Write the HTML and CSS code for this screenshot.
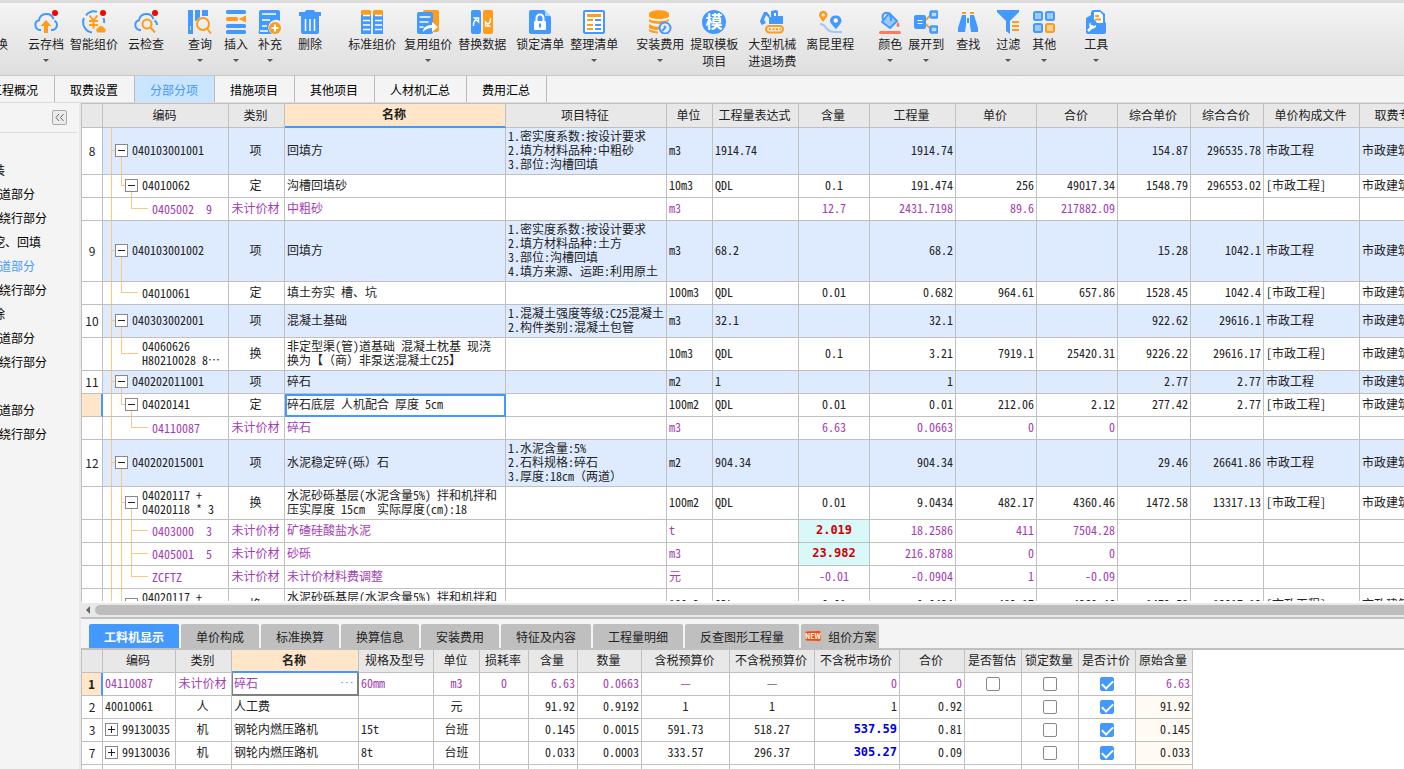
FILE: index.html
```html
<!DOCTYPE html>
<html lang="zh-CN">
<head>
<meta charset="utf-8">
<title>分部分项</title>
<link rel="stylesheet" href="styles.css">
</head>
<body>
<div class="app">
<header class="toolbar">
  <button class="tool first"><span class="glyph"></span><span>替换</span></button>
  <button class="tool g20"><svg class="glyph" viewBox="0 0 24 24"><path class="bs" d="M7 20H6a5 5 0 0 1-1-9.800a7.500 7.500 0 0 1 14.500-1M17 20h1a5 5 0 0 0 2.500-9.300"/><path class="o" d="M12 10l5.500 6H14v7h-4v-7H6.500z"/><circle class="r" cx="21" cy="3" r="3"/></svg><span>云存档</span><i class="caret"></i></button>
  <button class="tool g6"><svg class="glyph" viewBox="0 0 24 24"><path class="bs" d="M15 1.800A10.500 10.500 0 0 0 4 5.500M2 8a10.500 10.500 0 0 0 8 14.500M21.500 8a10 10 0 0 1 .5 5"/><path class="os" d="M7.500 5.500l4 5 4-5M7 11h9M7 15h9M11.500 10.500v8"/><path class="o" d="M15.500 22.500a2.500 2.500 0 0 1 .5-4.500a3.300 3.300 0 0 1 6 0a2.500 2.500 0 0 1 .5 4.500z"/><circle class="r" cx="21" cy="3" r="3"/></svg><span>智能组价</span></button>
  <button class="tool g10"><svg class="glyph" viewBox="0 0 24 24"><path class="bs" d="M7 20H6a5 5 0 0 1-1-9.800a7.500 7.500 0 0 1 14.500-1M23 15a5 5 0 0 0-2.500-4.300"/><circle class="os" cx="13" cy="14" r="4.500"/><path class="os" d="M16.500 17.500l4.500 5"/><circle class="r" cx="21" cy="3" r="3"/></svg><span>云检查</span></button>
  <button class="tool g24"><svg class="glyph" viewBox="0 0 24 24"><path class="b" d="M0 0h5v24H0zM7 0h5v7l-4 4H7zM14 0h6v6h-6z"/><path d="M2 16h1v4H2z" fill="#bde"/><circle class="os" cx="15" cy="14" r="6"/><path class="os" d="M19 18.500l4 5"/></svg><span>查询</span><i class="caret"></i></button>
  <button class="tool g12"><svg class="glyph" viewBox="0 0 24 24"><rect class="b" x="2" width="20" height="4" rx="1.500"/><rect class="o" x="2" y="7" width="12" height="4" rx="1.500"/><path class="o" d="M14.500 9L22 5.500v7z"/><rect class="b" x="2" y="14" width="20" height="4" rx="1.500"/><rect class="b" x="2" y="20" width="20" height="4" rx="1.500"/></svg><span>插入</span><i class="caret"></i></button>
  <button class="tool g10"><svg class="glyph" viewBox="0 0 24 24"><path class="b" d="M3 0h17a2 2 0 0 1 2 2v9a7 7 0 0 0-8 13H2a2 2 0 0 1-1-3V2a2 2 0 0 1 2-2z"/><path d="M4 4h14M4 10h8M4 16h5M2 21h8" stroke="#fff" stroke-width="1.500"/><circle class="o" cx="17" cy="18" r="6"/><path d="M17 14.500v7M13.500 18h7" stroke="#fff" stroke-width="2"/></svg><span>补充</span><i class="caret"></i></button>
  <button class="tool g16"><svg class="glyph" viewBox="0 0 24 24"><path class="b" d="M8 0h8l1 2h6v4H1V2h6zM3 6h18v16a2 2 0 0 1-2 2H5a2 2 0 0 1-2-2z"/><path d="M7.500 9v12M12 9v12M16.500 9v12" stroke="#fff" stroke-width="1.500"/></svg><span>删除</span></button>
  <button class="tool g26"><svg class="glyph" viewBox="0 0 24 24"><path class="b" d="M1 5h10v19H1zM13 5h10v19H13z"/><path class="o" d="M2 0h8l1 1v4H1V1zM14 0h8l1 1v4H13V1z"/><path d="M3 5.500h7M3 10.500h7M3 15h7M3 19.500h7M15 5.500h7M15 10.500h7M15 15h7M15 19.500h7" stroke="#fff" stroke-width="1.500"/></svg><span>标准组价</span></button>
  <button class="tool g8"><svg class="glyph" viewBox="0 0 24 24"><rect class="o" x="7" width="16" height="22" rx="2"/><rect class="b" x="1" y="2" width="16" height="22" rx="2"/><path d="M3.500 7h11M3.500 12h9M3.500 17h4" stroke="#fff" stroke-width="1.500"/><path d="M7 22c0-5 4-7 9-7v-3l6 5-6 5v-4c-4 0-6 1-9 4z" fill="#fff"/></svg><span>复用组价</span><i class="caret"></i></button>
  <button class="tool g6"><svg class="glyph" viewBox="0 0 24 24"><rect class="b" x="1" width="10" height="24" rx="2"/><rect class="o" x="13" width="10" height="24" rx="2"/><path d="M3.500 16c0-4 .5-5 3-6.500M4.500 8h4v4zM20.500 8c0 4-.5 5-3 6.500M19.500 16h-4v-4z" fill="none" stroke="#fff" stroke-width="1.500"/></svg><span>替换数据</span></button>
  <button class="tool g10"><svg class="glyph" viewBox="0 0 24 24"><path class="b" d="M3 0h13l7 7v15a2 2 0 0 1-2 2H3a2 2 0 0 1-2-2V2a2 2 0 0 1 2-2z"/><path d="M17 0l6 6h-6z" fill="#a9d3ff"/><rect x="6" y="11" width="12" height="9" rx="1" fill="#fff"/><path d="M8.500 11V8a3.500 3.500 0 0 1 7 0v3" fill="none" stroke="#fff" stroke-width="2"/><path d="M12 13.500v4" stroke="#49f" stroke-width="2"/></svg><span>锁定清单</span></button>
  <button class="tool g6"><svg class="glyph" viewBox="0 0 24 24"><rect x="2" y="1" width="20" height="22" rx="1" fill="#fff" stroke="#49f" stroke-width="2"/><path class="o" d="M5 4h14v3H5zM5 9h6v2H5zM5 14h6v2H5zM5 18h6v2H5z"/><path class="b" d="M13 9h6v2h-6zM13 14h6v2h-6zM13 18h6v2h-6z"/></svg><span>整理清单</span><i class="caret"></i></button>
  <button class="tool g18"><svg class="glyph" viewBox="0 0 24 24"><path class="o" d="M1 4c0-5 20-5 20 0v2c0 4-20 4-20 0zM1 9c4 3 16 3 20 0v2c-3 1-5 2-7 3-6 0-13-1-13-3zM1 14c3 2 7 3 10 3l-1 3c-5 0-9-1-9-3zM1 19c3 2 6 2 9 2.500v2C5 23 1 22 1 21z"/><circle class="bs" cx="17" cy="18" r="5.500"/><path class="bs" d="M14 21l3-3m-1-2l2 2"/></svg><span>安装费用</span><i class="caret"></i></button>
  <button class="tool g6"><svg class="glyph" viewBox="0 0 24 24"><circle class="b" cx="12" cy="12" r="12"/><text x="12" y="18" class="badge-char">模</text></svg><span>提取模板<br>项目</span></button>
  <button class="tool g10"><svg class="glyph" viewBox="0 0 24 24"><path class="b" d="M11 1l5-1 2 1v5h5v8H9V7h2zM0 11l4-9h3l3 4-1 2-3-3-2 5 2 3-4 2c-1-1-2-3-2-4z"/><path d="M14 3h2v3h-2z" fill="#fff"/><rect class="os" x="6" y="16" width="17" height="6.500" rx="3.200"/><path d="M9 19.300h12" stroke="#ff9c1a" stroke-width="2" stroke-dasharray="2 1.500"/></svg><span>大型机械<br>进退场费</span></button>
  <button class="tool g10"><svg class="glyph" viewBox="0 0 24 24"><path d="M2 14c5 0 5 3 7 5s4 3 7 3h8" fill="none" stroke="#9ccaff" stroke-width="2"/><path class="o" d="M5 12C3 9 1 7 1 5a4.200 4.200 0 0 1 8.500 0c0 2-2.500 4-4.500 7z"/><circle cx="5.200" cy="5" r="1.600" fill="#fff"/><path class="b" d="M18 19c-3-3-6-6-6-8.500a5.800 5.800 0 0 1 11.500 0c0 2.500-2.500 5.500-5.500 8.500z"/><circle cx="17.700" cy="10.500" r="2.200" fill="#fff"/></svg><span>离昆里程</span></button>
  <button class="tool g24"><svg class="glyph" viewBox="0 0 24 24"><path d="M11 3l8 8-7 7-8-6z" fill="#9ccaff" stroke="#49f" stroke-width="2" stroke-linejoin="round"/><path class="bs" d="M5 10c-2-8 5-10 8-2v3"/><path d="M20 12c2 2 2 5 0 5s-2-3 0-5z" fill="#f97c5c"/><rect x="1" y="21" width="22" height="3" rx="1.500" fill="#f97c5c"/></svg><span>颜色</span><i class="caret"></i></button>
  <button class="tool g6"><svg class="glyph" viewBox="0 0 24 24"><path class="os" d="M11 10c3 0 3-5 7-5M11 14c3 0 3 5 7 5"/><rect class="b" y="5" width="12" height="14" rx="2"/><path d="M3.500 10.500h5M3.500 13.500h5" stroke="#fff" stroke-width="1.200"/><rect x="16.500" y="1.500" width="7" height="6" rx="1" fill="#bde" stroke="#49f" stroke-width="2.500"/><rect x="16.500" y="16.500" width="7" height="6" rx="1" fill="#bde" stroke="#49f" stroke-width="2.500"/></svg><span>展开到</span><i class="caret"></i></button>
  <button class="tool g12"><svg class="glyph" viewBox="0 0 24 24"><path class="o" d="M6 2h4v2H6zM14 2h4v2h-4z"/><path class="b" d="M6 5h4v10l-1 7H2v-4zM14 5h4l4 13v4h-7l-1-7zM11 8h2v5h-2z"/></svg><span>查找</span></button>
  <button class="tool g16"><svg class="glyph" viewBox="0 0 24 24"><path class="b" d="M1 0h22v2l-9 9v13l-4-3V11L1 2z"/><path class="o" d="M16 11h7v2h-7zM16 15h7v2h-7zM16 19h7v2h-7z"/></svg><span>过滤</span><i class="caret"></i></button>
  <button class="tool g12"><svg class="glyph" viewBox="0 0 24 24"><g fill="#9ccaff" stroke="#49f" stroke-width="2"><rect x="2" y="2" width="8" height="8" rx="1.500"/><rect x="14" y="2" width="8" height="8" rx="1.500"/><rect x="2" y="14" width="8" height="8" rx="1.500"/></g><rect x="14" y="14" width="8" height="8" rx="1.500" fill="#ffcf8e" stroke="#ff9c1a" stroke-width="2"/></svg><span>其他</span><i class="caret"></i></button>
  <button class="tool g28"><svg class="glyph" viewBox="0 0 24 24"><path class="b" d="M2 8l5-3V3a3 3 0 0 1 3-3h6l5 4v8l1 1v9a2 2 0 0 1-2 2H4a2 2 0 0 1-2-2z"/><path d="M10 2h6l3 3v8h-6l-3-4z" fill="#fff"/><path class="o" d="M11 5h4v2h-4zM11 8.500h6v2h-6z"/><path d="M4 21l5-5" stroke="#fff" stroke-width="2.500"/><path d="M6 12l1 3 3 1 2-1v2l-3 2-4-3z" fill="#fff"/></svg><span>工具</span><i class="caret"></i></button>
</header>

<nav class="tabs">
  <a href="#">工程概况</a><a href="#">取费设置</a><a href="#" class="on">分部分项</a><a href="#">措施项目</a><a href="#">其他项目</a><a href="#">人材机汇总</a><a href="#">费用汇总</a>
</nav>

<div class="body">
<aside class="side">
  <div class="side-head"><button aria-label="收起"><svg viewBox="0 0 13 13"><path d="M6 3L3 6.500 6 10M10.500 3l-3 3.500 3 3.500"/></svg></button></div>
  <ul>
    <li class="far">装</li><li>道部分</li><li>绕行部分</li><li class="far">挖、回填</li><li class="on">道部分</li><li>绕行部分</li><li class="far">除</li><li>道部分</li><li>绕行部分</li><li></li><li>道部分</li><li>绕行部分</li>
  </ul>
</aside>

<main class="work">
<div class="grid-wrap">
<table class="grid list">
<colgroup><col class="w21"><col class="w126"><col class="w56"><col class="w221"><col class="w161"><col class="w46"><col class="w86"><col class="w71"><col class="w86"><col class="w81"><col class="w81"><col class="w73"><col class="w73"><col class="w96"><col class="w80"></colgroup>
<thead><tr><th></th><th>编码</th><th>类别</th><th class="cur">名称</th><th>项目特征</th><th>单位</th><th>工程量表达式</th><th>含量</th><th>工程量</th><th>单价</th><th>合价</th><th>综合单价</th><th>综合合价</th><th>单价构成文件</th><th>取费专业</th></tr></thead>
<tbody>
<tr class="item"><th>8</th><td class="n root"><button class="tg" aria-label="折叠"></button><span>040103001001</span></td><td>项</td><td>回填方</td><td>1.密实度系数:按设计要求
2.填方材料品种:中粗砂
3.部位:沟槽回填</td><td>m3</td><td>1914.74</td><td></td><td>1914.74</td><td></td><td></td><td>154.87</td><td>296535.78</td><td>市政工程</td><td>市政建筑</td></tr>
<tr><th></th><td class="n group"><button class="tg" aria-label="折叠"></button><span>04010062</span></td><td>定</td><td>沟槽回填砂</td><td></td><td>10m3</td><td>QDL</td><td>0.1</td><td>191.474</td><td>256</td><td>49017.34</td><td>1548.79</td><td>296553.02</td><td>[市政工程]</td><td>市政建筑</td></tr>
<tr class="mat"><th></th><td class="n leaf2"><span>0405002  9</span></td><td>未计价材</td><td>中粗砂</td><td></td><td>m3</td><td></td><td>12.7</td><td>2431.7198</td><td>89.6</td><td>217882.09</td><td></td><td></td><td></td><td></td></tr>
<tr class="item"><th>9</th><td class="n root"><button class="tg" aria-label="折叠"></button><span>040103001002</span></td><td>项</td><td>回填方</td><td>1.密实度系数:按设计要求
2.填方材料品种:土方
3.部位:沟槽回填
4.填方来源、运距:利用原土</td><td>m3</td><td>68.2</td><td></td><td>68.2</td><td></td><td></td><td>15.28</td><td>1042.1</td><td>市政工程</td><td>市政建筑</td></tr>
<tr><th></th><td class="n leaf1"><span>04010061</span></td><td>定</td><td>填土夯实 槽、坑</td><td></td><td>100m3</td><td>QDL</td><td>0.01</td><td>0.682</td><td>964.61</td><td>657.86</td><td>1528.45</td><td>1042.4</td><td>[市政工程]</td><td>市政建筑</td></tr>
<tr class="item"><th>10</th><td class="n root"><button class="tg" aria-label="折叠"></button><span>040303002001</span></td><td>项</td><td>混凝土基础</td><td>1.混凝土强度等级:C25混凝土
2.构件类别:混凝土包管</td><td>m3</td><td>32.1</td><td></td><td>32.1</td><td></td><td></td><td>922.62</td><td>29616.1</td><td>市政工程</td><td>市政建筑</td></tr>
<tr><th></th><td class="n leaf1"><span>04060626
H80210028 8…</span></td><td>换</td><td>非定型渠(管)道基础 混凝土枕基 现浇
换为【（商）非泵送混凝土C25】</td><td></td><td>10m3</td><td>QDL</td><td>0.1</td><td>3.21</td><td>7919.1</td><td>25420.31</td><td>9226.22</td><td>29616.17</td><td>[市政工程]</td><td>市政建筑</td></tr>
<tr class="item"><th>11</th><td class="n root"><button class="tg" aria-label="折叠"></button><span>040202011001</span></td><td>项</td><td>碎石</td><td></td><td>m2</td><td>1</td><td></td><td>1</td><td></td><td></td><td>2.77</td><td>2.77</td><td>市政工程</td><td>市政建筑</td></tr>
<tr><th class="cur"></th><td class="n group"><button class="tg" aria-label="折叠"></button><span>04020141</span></td><td>定</td><td class="picked">碎石底层 人机配合 厚度 5cm</td><td></td><td>100m2</td><td>QDL</td><td>0.01</td><td>0.01</td><td>212.06</td><td>2.12</td><td>277.42</td><td>2.77</td><td>[市政工程]</td><td>市政建筑</td></tr>
<tr class="mat"><th></th><td class="n leaf2"><span>04110087</span></td><td>未计价材</td><td>碎石</td><td></td><td>m3</td><td></td><td>6.63</td><td>0.0663</td><td>0</td><td>0</td><td></td><td></td><td></td><td></td></tr>
<tr class="item"><th>12</th><td class="n root"><button class="tg" aria-label="折叠"></button><span>040202015001</span></td><td>项</td><td>水泥稳定碎(砾）石</td><td>1.水泥含量:5%
2.石料规格:碎石
3.厚度:18cm（两道）</td><td>m2</td><td>904.34</td><td></td><td>904.34</td><td></td><td></td><td>29.46</td><td>26641.86</td><td>市政工程</td><td>市政建筑</td></tr>
<tr><th></th><td class="n group more"><button class="tg" aria-label="折叠"></button><span>04020117 +
04020118 * 3</span></td><td>换</td><td>水泥砂砾基层(水泥含量5%) 拌和机拌和
压实厚度 15cm  实际厚度(cm):18</td><td></td><td>100m2</td><td>QDL</td><td>0.01</td><td>9.0434</td><td>482.17</td><td>4360.46</td><td>1472.58</td><td>13317.13</td><td>[市政工程]</td><td>市政建筑</td></tr>
<tr class="mat"><th></th><td class="n leaf2 more"><span>0403000  3</span></td><td>未计价材</td><td>矿碴硅酸盐水泥</td><td></td><td>t</td><td></td><td class="edited">2.019</td><td>18.2586</td><td>411</td><td>7504.28</td><td></td><td></td><td></td><td></td></tr>
<tr class="mat"><th></th><td class="n leaf2 more"><span>0405001  5</span></td><td>未计价材</td><td>砂砾</td><td></td><td>m3</td><td></td><td class="edited">23.982</td><td>216.8788</td><td>0</td><td>0</td><td></td><td></td><td></td><td></td></tr>
<tr class="mat"><th></th><td class="n leaf2 end"><span>ZCFTZ</span></td><td>未计价材</td><td>未计价材料费调整</td><td></td><td>元</td><td></td><td>-0.01</td><td>-0.0904</td><td>1</td><td>-0.09</td><td></td><td></td><td></td><td></td></tr>
<tr><th></th><td class="n group more"><button class="tg" aria-label="折叠"></button><span>04020117 +
04020118 * 3</span></td><td>换</td><td>水泥砂砾基层(水泥含量5%) 拌和机拌和
压实厚度 15cm  实际厚度(cm):18</td><td></td><td>100m2</td><td>QDL</td><td>0.01</td><td>9.0434</td><td>482.17</td><td>4360.46</td><td>1472.58</td><td>13317.13</td><td>[市政工程]</td><td>市政建筑</td></tr>
</tbody>
</table>
</div>
<div class="hscroll"><button aria-label="向左滚动"></button><div class="thumb"></div></div>

<section class="detail">
<nav class="subtabs">
  <button class="on">工料机显示</button><button>单价构成</button><button>标准换算</button><button>换算信息</button><button>安装费用</button><button>特征及内容</button><button>工程量明细</button><button>反查图形工程量</button><button class="tight"><svg viewBox="0 0 16 10"><path d="M1 1l14-.5.5 4.500-.5 4.500L1 9z" fill="#ff4a00" stroke="#ff4a00" stroke-linejoin="round"/><text x="8" y="8">NEW</text></svg>组价方案</button>
</nav>
<div class="detail-wrap">
<table class="grid res">
<colgroup><col class="w21"><col class="w73"><col class="w56"><col class="w127"><col class="w75"><col class="w46"><col class="w49"><col class="w49"><col class="w64"><col class="w88"><col class="w85"><col class="w85"><col class="w65"><col class="w57"><col class="w57"><col class="w57"><col class="w57"></colgroup>
<thead><tr><th></th><th>编码</th><th>类别</th><th class="cur">名称</th><th>规格及型号</th><th>单位</th><th>损耗率</th><th>含量</th><th>数量</th><th>含税预算价</th><th>不含税预算价</th><th>不含税市场价</th><th>合价</th><th>是否暂估</th><th>锁定数量</th><th>是否计价</th><th>原始含量</th></tr></thead>
<tbody>
<tr class="mat"><th class="cur">1</th><td>04110087</td><td>未计价材</td><td class="editing"><div><span>碎石</span><button aria-label="选择">···</button></div></td><td>60mm</td><td>m3</td><td>0</td><td>6.63</td><td>0.0663</td><td>—</td><td>—</td><td>0</td><td>0</td><td><input type="checkbox" aria-label="是否暂估"></td><td><input type="checkbox" aria-label="锁定数量"></td><td><input type="checkbox" checked aria-label="是否计价"></td><td>6.63</td></tr>
<tr><th>2</th><td>40010061</td><td>人</td><td>人工费</td><td></td><td>元</td><td></td><td>91.92</td><td>0.9192</td><td>1</td><td>1</td><td>1</td><td>0.92</td><td></td><td><input type="checkbox" aria-label="锁定数量"></td><td><input type="checkbox" checked aria-label="是否计价"></td><td class="warm">91.92</td></tr>
<tr><th>3</th><td class="x"><button class="tg plus" aria-label="展开"></button><span>99130035</span></td><td>机</td><td>钢轮内燃压路机</td><td>15t</td><td>台班</td><td></td><td>0.145</td><td>0.0015</td><td>591.73</td><td>518.27</td><td class="price">537.59</td><td>0.81</td><td></td><td><input type="checkbox" aria-label="锁定数量"></td><td><input type="checkbox" checked aria-label="是否计价"></td><td class="warm">0.145</td></tr>
<tr><th>7</th><td class="x"><button class="tg plus" aria-label="展开"></button><span>99130036</span></td><td>机</td><td>钢轮内燃压路机</td><td>8t</td><td>台班</td><td></td><td>0.033</td><td>0.0003</td><td>333.57</td><td>296.37</td><td class="price">305.27</td><td>0.09</td><td></td><td><input type="checkbox" aria-label="锁定数量"></td><td><input type="checkbox" checked aria-label="是否计价"></td><td class="warm">0.033</td></tr>
<tr><th></th><td></td><td></td><td></td><td></td><td></td><td></td><td></td><td></td><td></td><td></td><td></td><td></td><td></td><td></td><td></td><td class="warm"></td></tr>
</tbody>
</table>
</div>
</section>
</main>
</div>
</div>
</body>
</html>
```
FILE: styles.css
```css
* { box-sizing: border-box; }
:root {
  --blue: #4499ff;
  --orange: #ff9c1a;
  --line: #c0c0c0;
  --guide: #ffc77d;
  --ui: "Noto Sans CJK SC", "Noto Sans", sans-serif;
  --cell: "Noto Sans Mono CJK SC", "Noto Sans CJK SC", monospace;
}
body { margin: 0; font: 12px/17px var(--ui); color: #222; background: #f4f4f4; text-spacing-trim: space-all; }
button { font: inherit; color: inherit; background: none; border: 0; padding: 0; margin: 0; }
a { color: inherit; text-decoration: none; }
.app { height: 100vh; display: flex; flex-direction: column; overflow: hidden; }

.toolbar {
  flex: none; height: 76px; display: flex; align-items: flex-start; padding-top: 7px;
  border-top: 3px solid #dcdcdc; border-bottom: 1px solid #c8c8c8;
  background: linear-gradient(#f4f4f4, #dedede); overflow: hidden;
}
.tool { flex: none; display: flex; flex-direction: column; align-items: center; white-space: nowrap; }
.tool > span { margin-top: 1px; }
.first { margin-left: -16px; }
.glyph { width: 24px; height: 24px; display: block; }
.tool > span.glyph { margin: 0; }
.g6 { margin-left: 6px; } .g8 { margin-left: 8px; } .g10 { margin-left: 10px; } .g12 { margin-left: 12px; }
.g16 { margin-left: 16px; } .g18 { margin-left: 18px; } .g20 { margin-left: 20px; } .g24 { margin-left: 24px; }
.g26 { margin-left: 26px; } .g28 { margin-left: 28px; }
.caret { margin-top: 7px; border: 3px solid transparent; border-top-color: #555; border-bottom: 0; }
.b { fill: var(--blue); } .o { fill: var(--orange); } .r { fill: #f00; }
.bs { fill: none; stroke: var(--blue); stroke-width: 2; }
.os { fill: none; stroke: var(--orange); stroke-width: 2; }
.badge-char { fill: #fff; font: bold 17px var(--ui); text-anchor: middle; }

.tabs { flex: none; height: 27px; display: flex; background: #f4f4f4; border-bottom: 1px solid #dcdcdc; color: #000; }
.tabs a { padding: 0 16px 0 15px; line-height: 27px; border-right: 1px solid #bbb; white-space: nowrap; }
.tabs a:first-child { margin-left: -25px; }
.tabs .on { background: #c9e5ff; color: var(--blue); }

.body { flex: 1; min-height: 0; display: flex; }
.side { flex: none; width: 81px; border-right: 2px solid #e8e8e8; overflow: hidden; color: #000; }
.side-head { height: 30px; margin-right: 2px; padding: 7px 10px 0 0; display: flex; justify-content: flex-end; border-bottom: 1px solid #dcdcdc; }
.side-head button { width: 15px; height: 15px; border: 1px solid #aaa; border-radius: 2px; background: #ececec; display: flex; }
.side-head svg { width: 13px; height: 13px; fill: none; stroke: #666; }
.side ul { list-style: none; margin: 0; padding: 25px 0 0; }
.side li { height: 24px; line-height: 24px; margin-left: -1px; white-space: nowrap; }
.side .far { margin-left: -7px; }
.side .on { color: var(--blue); }

.work { flex: 1; min-width: 0; display: flex; flex-direction: column; }
.grid-wrap { flex: 1; min-height: 0; overflow: hidden; background: #fff; border-top: 1px solid var(--line); border-bottom: 2px solid #fff; border-left: 1px solid var(--line); }

.grid { table-layout: fixed; border-collapse: separate; border-spacing: 0; font: 12px/14px var(--cell); color: #222; }
.list { width: 1358px; }
.res { width: 1112px; border-left: 1px solid var(--line); }
.grid td, .grid th { height: 23px; padding: 1px 2px 3px; border-right: 1px solid var(--line); border-bottom: 1px solid var(--line); white-space: pre; overflow: hidden; font-weight: normal; text-align: left; vertical-align: middle; }
.grid th { padding: 1px 2px 3px 0; text-align: center; }
.grid tbody th { padding: 2px 0; font-family: var(--ui); }
.grid thead th { background: #e8e8e8; }
.list thead th { height: 24px; }
.grid thead .cur { background: #ffe6c8; border-bottom: 2px solid var(--blue); font-weight: bold; }
.grid tbody .cur { background: #ffe6c8; border-right: 2px solid var(--blue); font-weight: bold; }
.item td { background-color: #deeafe; }
.mat td { color: #a33cb4; }

.list td:nth-child(3), .list td:nth-child(8),
.res td:nth-child(3), .res td:nth-child(6), .res td:nth-child(7), .res td:nth-child(10), .res td:nth-child(11),
.res td:nth-child(14), .res td:nth-child(15), .res td:nth-child(16) { text-align: center; }
.list td:nth-child(3), .res td:nth-child(3) { padding: 1px 2px 3px 0; }
.list td:nth-child(n+9):nth-child(-n+13),
.res td:nth-child(8), .res td:nth-child(9), .res td:nth-child(12), .res td:nth-child(13), .res td:nth-child(17) { text-align: right; }
.res td:nth-child(n+14):nth-child(-n+16) { padding: 2px; }
.picked { outline: 2px solid var(--blue); outline-offset: -2px; }
.mat .edited { background: #d9f8f8; color: #d00000; font: bold 12px/14px "DejaVu Sans Mono", monospace; }
.res .price { color: #0000e0; font: bold 12px/14px "DejaVu Sans Mono", monospace; }
.warm { background: #fffaf3; }

/* tree guides: full-height line, horizontal stub, then the lines of the deeper levels */
.grid .n {
  --g: linear-gradient(var(--guide), var(--guide));
  --stub: linear-gradient(var(--guide) 50%, transparent 50%);
  background-repeat: no-repeat; background-image: var(--g), var(--stub), var(--g), var(--g);
}
.grid .root { padding-left: 12px; background-size: 1px 100%, 5px 2px, 1px 50%, 0 0; background-position: 8px 0, 8px 50%, 18px 100%, 0 0; }
.grid .group { padding-left: 22px; background-size: 1px 100%, 5px 2px, 1px 50%, 1px 50%; background-position: 8px 0, 18px 50%, 18px 0, 28px 100%; }
.grid .group.more { background-size: 1px 100%, 5px 2px, 1px 100%, 1px 50%; }
.grid .leaf1 { padding-left: 39px; background-size: 1px 100%, 17px 2px, 1px 50%, 0 0; background-position: 8px 0, 18px 50%, 18px 0, 0 0; }
.grid .leaf2 { padding-left: 49px; background-size: 1px 100%, 17px 2px, 1px 50%, 0 0; background-position: 8px 0, 28px 50%, 28px 0, 18px 0; }
.grid .leaf2.more { background-size: 1px 100%, 17px 2px, 1px 100%, 1px 100%; }
.grid .leaf2.end { background-size: 1px 100%, 17px 2px, 1px 50%, 1px 100%; }
.grid .root, .grid .group, .x { line-height: 0; }
.n span, .x span { display: inline-block; vertical-align: middle; line-height: 14px; }
.tg {
  width: 13px; height: 13px; margin-right: 4px; border: 1px solid #888; vertical-align: middle;
  background: linear-gradient(#222, #222) center / 7px 1px no-repeat, #fff;
}
.plus { background: linear-gradient(#222, #222) center / 7px 1px no-repeat, linear-gradient(#222, #222) center / 1px 7px no-repeat, #fff; }

.hscroll { flex: none; height: 16px; display: flex; align-items: center; gap: 5px; padding-left: 5px; background: #e8e8e8; border-bottom: 2px solid var(--line); }
.hscroll button { width: 4px; height: 8px; border: 4px solid transparent; border-right: 4px solid #666; border-left: 0; }
.thumb { flex: 1; height: 10px; background: #bdbdbd; border-radius: 5px 0 0 5px; }

.detail { flex: none; height: 150px; display: flex; flex-direction: column; }
.subtabs { display: flex; gap: 2px; padding: 5px 8px 0; }
.subtabs button { height: 24px; padding: 0 15px; background: #bfbfbf; border-radius: 2px 2px 0 0; display: flex; align-items: center; white-space: nowrap; }
.subtabs .on { background: var(--blue); color: #fff; font-weight: bold; }
.subtabs .tight { padding: 0 3px 0 4px; gap: 7px; }
.subtabs svg { width: 16px; height: 10px; }
.subtabs text { fill: #fff; font: bold 7px var(--ui); text-anchor: middle; }
.detail-wrap { flex: 1; min-height: 0; overflow: hidden; background: #fff; border-top: 2px solid var(--line); }
.res .editing { padding: 0 0 1px; border-right: 2px solid #808080; border-bottom: 2px solid #808080; border-left: 1px solid #808080; }
.editing div { display: flex; justify-content: space-between; padding: 0 3px 0 1px; }
.editing button { color: #2f7fc8; font: bold 8px/14px "Liberation Mono", monospace; }
.res input { appearance: none; display: block; width: 14px; height: 14px; margin: 0 auto; border: 1px solid #888; border-radius: 2px; background: #fff; }
.res input:checked { background: var(--blue); border-color: var(--blue); }
.res input:checked::before { content: ""; display: block; width: 9px; height: 5px; margin: 2px 1px; border: solid #fff; border-width: 0 0 2px 2px; transform: rotate(-45deg); }

.w21 { width: 21px; } .w46 { width: 46px; } .w49 { width: 49px; } .w56 { width: 56px; } .w57 { width: 57px; }
.w64 { width: 64px; } .w65 { width: 65px; } .w71 { width: 71px; } .w73 { width: 73px; } .w75 { width: 75px; }
.w80 { width: 80px; } .w81 { width: 81px; } .w85 { width: 85px; } .w86 { width: 86px; } .w88 { width: 88px; }
.w96 { width: 96px; } .w126 { width: 126px; } .w127 { width: 127px; } .w161 { width: 161px; } .w221 { width: 221px; }
```
